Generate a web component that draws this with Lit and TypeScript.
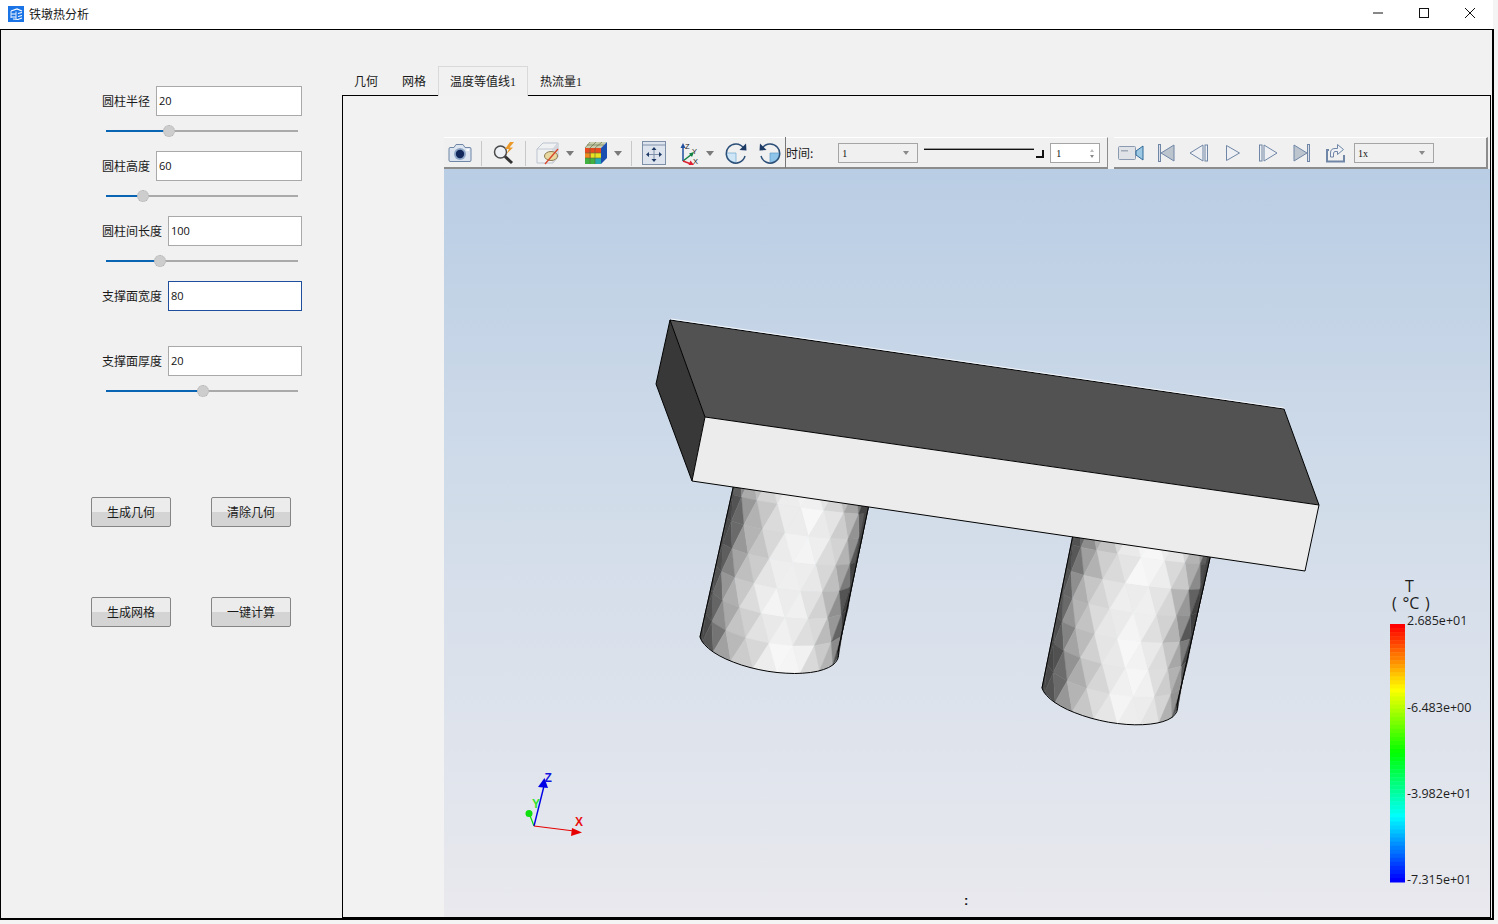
import { LitElement, html, css, svg } from "lit";
import { customElement } from "lit/decorators.js";

type Pt = [number, number];
const hash = (a: number, b: number) => {
  const s = Math.sin(a * 127.1 + b * 311.7) * 43758.5453;
  return s - Math.floor(s);
};

const LIGHT: Pt[] = [[0, 72], [0.035, 95], [0.1, 160], [0.2, 195], [0.35, 228], [0.5, 244], [0.65, 236], [0.78, 212], [0.87, 175], [0.93, 135], [0.965, 70], [1, 60]];
const light = (u: number) => {
  for (let i = 1; i < LIGHT.length; i++) {
    if (u <= LIGHT[i][0]) {
      const [a, b] = LIGHT[i - 1];
      const [c, d] = LIGHT[i];
      return b + ((u - a) / (c - a)) * (d - b);
    }
  }
  return 60;
};

function cylinder(tl: Pt, tr: Pt, bl: Pt, br: Pt, bulge: Pt, seed: number) {
  const nT = 9, nV = 7;
  const p = (th: number, v: number): Pt => {
    const t = Math.max(0, Math.min(Math.PI, th));
    const u = (1 - Math.cos(t)) / 2;
    const s = Math.sin(t);
    const x0 = tl[0] + (tr[0] - tl[0]) * u, y0 = tl[1] + (tr[1] - tl[1]) * u;
    const x1 = bl[0] + (br[0] - bl[0]) * u, y1 = bl[1] + (br[1] - bl[1]) * u;
    return [x0 + (x1 - x0) * v + bulge[0] * s * v, y0 + (y1 - y0) * v + bulge[1] * s * v];
  };
  const step = Math.PI / nT;
  const vert = (c: number, r: number) => p((c + (r % 2 ? 0.5 : 0)) * step, r / nV);
  const shade = (c: number, r: number) => {
    const th = Math.max(0, Math.min(Math.PI, (c + 0.5 + (r % 2 ? 0.5 : 0)) * step));
    const u0 = (1 - Math.cos(th)) / 2;
    const u = u0 + 0.05 * Math.sin(th) * Math.sin(r * 1.15 + seed);
    const n = (hash(c + seed, r) - 0.5) * 12 * Math.sin(th);
    return Math.round(Math.min(248, Math.max(58, light(u) + n)));
  };
  const tris: { pts: string; g: number }[] = [];
  const str = (a: Pt[]) => a.map((q) => `${q[0].toFixed(1)},${q[1].toFixed(1)}`).join(" ");
  for (let r = 0; r < nV; r++) {
    for (let c = -1; c <= nT; c++) {
      const a = vert(c, r), b = vert(c + 1, r), d = vert(c, r + 1), e = vert(c + 1, r + 1);
      if (r % 2 === 0) {
        tris.push({ pts: str([a, b, d]), g: shade(c, r) });
        tris.push({ pts: str([b, e, d]), g: shade(c + 0.5, r) });
      } else {
        tris.push({ pts: str([a, b, e]), g: shade(c, r) });
        tris.push({ pts: str([a, e, d]), g: shade(c - 0.5, r) });
      }
    }
  }
  const outline: Pt[] = [p(0, 0), p(0, 1)];
  for (let i = 1; i <= 24; i++) outline.push(p((i / 24) * Math.PI, 1));
  outline.push(p(Math.PI, 0));
  const band: Pt[] = [];
  for (let i = 0; i <= 8; i++) band.push(p(Math.PI * 0.9, i / 8));
  for (let i = 8; i >= 0; i--) band.push(p(Math.PI, i / 8));
  return svg`${tris.map((t) => {
    const col = `rgb(${t.g},${t.g},${t.g})`;
    return svg`<polygon points=${t.pts} fill=${col} stroke=${col} stroke-width="0.4"></polygon>`;
  })}<polygon points=${str(band)} fill="#444"></polygon><polyline points=${str(outline)} fill="none" stroke="#000" stroke-width="1"></polyline>`;
}

function legendBands() {
  const n = 64, top = 624, h = 258;
  const out = [];
  for (let i = 0; i < n; i++) {
    const hue = Math.round((i / (n - 1)) * 240);
    out.push(svg`<rect x="1390" y=${top + (i * h) / n} width="15" height=${h / n + 0.5} fill=${`hsl(${hue},100%,50%)`}></rect>`);
  }
  return out;
}

const scene = () => svg`
  <svg class="scene" viewBox="444 169 1046 748" width="1046" height="748">
    ${cylinder([737, 470], [872, 490], [700, 637], [838, 652], [8, 28], 3)}
    ${cylinder([1076, 520], [1214, 540], [1042, 688], [1177, 705], [8, 27], 11)}
    <polygon points="670,320 1284,409 1319,505 705,417" fill="#525252"></polygon>
    <polygon points="670,320 656,384 692,481 705,417" fill="#383838"></polygon>
    <polygon points="705,417 1319,505 1305,571 692,481" fill="#ececec"></polygon>
    <path d="M670 320L1284 409L1319 505L1305 571L692 481L656 384Z M705 417L1319 505 M705 417L692 481 M670 320L705 417" fill="none" stroke="#000" stroke-width="1"></path>
    <path d="M671 319L1284 408" fill="none" stroke="#fff" stroke-width="0.8"></path>

    <path d="M534 826L529 813" stroke="#00e000" stroke-width="1.2" fill="none"></path>
    <circle cx="529" cy="813.5" r="3.5" fill="#10e010"></circle>
    <path d="M534 826L544 786" stroke="#0000e6" stroke-width="1.4" fill="none"></path>
    <path d="M544.500 778L548 788L538 787Z" fill="#0000e6"></path>
    <path d="M534 826L574 831" stroke="#e60000" stroke-width="1.2" fill="none"></path>
    <path d="M582 832.500L571 836L572 828Z" fill="#e60000"></path>
    <text class="ax" x="544.500" y="782" fill="#1414e0">Z</text>
    <text class="ax" x="532" y="808" fill="#30e030">Y</text>
    <text class="ax" x="575" y="826" fill="#e81010">X</text>

    ${legendBands()}
    <text class="lgt" x="1405" y="592">T</text>
    <text class="lgc" x="1392" y="609">( °C )</text>
    <text class="lg" x="1407" y="625">2.685e+01</text>
    <text class="lg" x="1407" y="712">-6.483e+00</text>
    <text class="lg" x="1407" y="798">-3.982e+01</text>
    <text class="lg" x="1407" y="884">-7.315e+01</text>
    <text class="colon" x="964" y="905">:</text>
  </svg>`;

const sl = "#6f86a6";
const icons = {
  camera: html`<svg width="24" height="22" viewBox="0 0 24 22"><path d="M2 5.500H6L8 2.500H15L17 5.500H22Q23 5.500 23 7V18Q23 19.500 22 19.500H2Q1 19.500 1 18V7Q1 5.500 2 5.500Z" fill="#dbe4ef" stroke=${sl}></path><circle cx="12" cy="12" r="6" fill="#8ea6c6"></circle><circle cx="12" cy="12" r="4.200" fill="#12285a"></circle><rect x="18.500" y="7" width="2.500" height="2" fill="#fff"></rect></svg>`,
  search: html`<svg width="24" height="24" viewBox="0 0 24 24"><circle cx="8.500" cy="11" r="6" fill="#eef2f6" stroke="#4a4a4a" stroke-width="1.500"></circle><path d="M13 15.500L20 22" stroke="#333" stroke-width="3"></path><path d="M18 1L13 8H17L14.500 13L21 6.500H17.500L22 1Z" fill="#eb9a2a"></path></svg>`,
  cube: html`<svg width="26" height="24" viewBox="-2 0 26 24"><path d="M1 8L7 2H22V16L17 22H1Z" fill="#f0f1f3" stroke="#bcc4d0"></path><path d="M1 8H17V22M17 8L22 2" fill="none" stroke="#c4cad4"></path><path d="M17 8L22 2V16L17 22Z" fill="#d4d8de"></path><ellipse cx="15" cy="15" rx="6.500" ry="4.500" fill="#e9d9a0" stroke="#8a7a50"></ellipse><path d="M9 23L22 8" stroke="#d8452a" stroke-width="1.300"></path></svg>`,
  color: html`<svg width="28" height="24" viewBox="-4 0 28 24"><path d="M1 7L6 1H23L17 7Z" fill="#c8cdb0"></path><path d="M1 7H17V23H1Z" fill="#f2c820"></path><rect x="1" y="7" width="16" height="5" fill="#e84a20"></rect><rect x="1" y="12" width="6" height="5" fill="#f08a20"></rect><rect x="7" y="12" width="10" height="5" fill="#e8e020"></rect><rect x="1" y="17" width="16" height="6" fill="#40b040"></rect><rect x="11" y="17" width="6" height="6" fill="#28a8b0"></rect><path d="M17 7L23 1V17L17 23Z" fill="#1c50b0"></path><path d="M6 7V23M11 7V23M1 12H17M1 17H17M6 1L1 7M12 1L6 7M18 1L11 7M3 4H20" stroke="#5a6a3a" stroke-width=".6" fill="none"></path></svg>`,
  fit: html`<svg width="24" height="24" viewBox="0 0 24 24"><rect x="0.500" y="0.500" width="23" height="23" fill="#dde4ee" stroke="#7e8fa8"></rect><path d="M1 4H23" stroke="#7e8fa8"></path><path d="M12 6L9.500 9H14.500ZM12 21L9.500 18H14.500ZM4 13.500L7 11V16ZM20 13.500L17 11V16Z" fill="#1e3a66"></path><path d="M12 9V18M7 13.500H17" stroke="#7e8fa8"></path></svg>`,
  axes: html`<svg width="22" height="24" viewBox="0 0 22 24"><path d="M4 20V6" stroke="#2050a0" stroke-width="1.500"></path><path d="M4 2L1.500 7H6.500Z" fill="#2050a0"></path><path d="M4 20L13 13" stroke="#108040" stroke-width="1.500"></path><path d="M15 11L10 12.500L13 16Z" fill="#108040"></path><path d="M4 20L12 23" stroke="#e02030" stroke-width="1.500"></path><path d="M15 24L9.500 24L11.500 19.500Z" fill="#e02030"></path><text class="tiny" x="6" y="8">Z</text><text class="tiny" x="13" y="13">Y</text><text class="tiny" x="14" y="23">X</text></svg>`,
  rotR: html`<svg width="22" height="22" viewBox="0 0 22 22"><path d="M11 11V20.500A9.500 9.500 0 0 1 1.500 11Z" fill="#cfe6f7" stroke="#6fa8d0" stroke-width=".7"></path><path d="M18.500 6A9.500 9.500 0 1 0 20 14" fill="none" stroke="#2c4f78" stroke-width="1.500"></path><path d="M21 1.500L21.500 8.500L14.500 8Z" fill="#1c3a64"></path></svg>`,
  rotL: html`<svg width="22" height="22" viewBox="0 0 22 22"><path d="M11 11V20.500A9.500 9.500 0 0 0 20.500 11Z" fill="#8ec4ea" stroke="#5c9cc8" stroke-width=".7"></path><path d="M3.500 6A9.500 9.500 0 1 1 2 14" fill="none" stroke="#2c4f78" stroke-width="1.500"></path><path d="M1 1.500L0.500 8.500L7.500 8Z" fill="#1c3a64"></path></svg>`,
  video: html`<svg width="26" height="16" viewBox="0 0 26 16"><rect x="0.500" y="1.500" width="17" height="13" rx="1" fill="#dfe3e8" stroke="#8a9ab0"></rect><rect x="3" y="5" width="7" height="1.500" fill="#a0aab8"></rect><path d="M18 6L25 1V15L18 10Z" fill="#9cc8e4" stroke="#2f6a98"></path></svg>`,
  first: html`<svg width="18" height="18" viewBox="0 0 18 18"><rect x="1.500" y="0.500" width="2" height="17" fill="#dbe0e8" stroke=${sl}></rect><path d="M17 1V17L4 9Z" fill="#bcc4ce" stroke=${sl}></path></svg>`,
  prev: html`<svg width="20" height="18" viewBox="0 0 20 18"><path d="M14 1V17L1 9Z" fill="#eef0f3" stroke=${sl}></path><rect x="16" y="1" width="2.500" height="16" fill="#eef0f3" stroke=${sl}></rect></svg>`,
  play: html`<svg width="16" height="18" viewBox="0 0 16 18"><path d="M1.500 1.500V16.500L14.500 9Z" fill="#eef0f3" stroke=${sl}></path></svg>`,
  next: html`<svg width="20" height="18" viewBox="0 0 20 18"><rect x="1.500" y="1" width="2.500" height="16" fill="#eef0f3" stroke=${sl}></rect><path d="M6 1V17L19 9Z" fill="#eef0f3" stroke=${sl}></path></svg>`,
  last: html`<svg width="18" height="18" viewBox="0 0 18 18"><path d="M1 1V17L14 9Z" fill="#bcc4ce" stroke=${sl}></path><rect x="14.500" y="0.500" width="2" height="17" fill="#dbe0e8" stroke=${sl}></rect></svg>`,
  share: html`<svg width="20" height="20" viewBox="0 0 20 20"><path d="M4 7H2V18.500H19V12" fill="none" stroke=${sl} stroke-width="2"></path><path d="M5.500 14V10Q5.500 5.500 10 5.500H12.500V1.500L18.500 6.500L12.500 11.500V8.500H10Q8.500 8.500 8.500 11V14Z" fill="#eef1f5" stroke=${sl}></path></svg>`,
  drop: html`<svg width="8" height="5" viewBox="0 0 8 5"><path d="M0 0H8L4 5Z" fill="#7a7a7a"></path></svg>`,
};

const fields = [
  { label: "圆柱半径", value: "20", pos: 63, wide: true },
  { label: "圆柱高度", value: "60", pos: 37, wide: true },
  { label: "圆柱间长度", value: "100", pos: 54, wide: false },
  { label: "支撑面宽度", value: "80", focus: true, wide: false },
  { label: "支撑面厚度", value: "20", pos: 97, wide: false },
];

@customElement("app-root")
export class AppRoot extends LitElement {
  static styles = css`
    :host { display: block; width: 1498px; height: 924px; background: #f4f4f4; overflow: hidden;
      font-family: "Noto Sans CJK SC", "Liberation Sans", sans-serif; font-size: 12px; color: #1a1a1a; }
    .title { height: 29px; width: 1493px; background: #fff; display: flex; align-items: center; }
    .logo { margin: 0 0 2px 8px; }
    .title-text { margin-left: 5px; flex: 1; padding-bottom: 3px; }
    .wbtn { width: 46px; height: 29px; display: flex; align-items: center; justify-content: center; padding-bottom: 3px; box-sizing: border-box; }

    .window { width: 1494px; height: 891px; box-sizing: border-box; border: 1px solid #000; border-width: 1px 2px 2px 1px;
      background: #f1f1f1; display: flex; }
    .side { width: 341px; flex: none; padding-top: 56px; box-sizing: border-box; }
    .field { height: 65px; width: 301px; }
    .row { display: flex; justify-content: flex-end; align-items: center; gap: 6px; height: 30px; }
    .row span { padding-bottom: 2px; }
    .input { height: 30px; box-sizing: border-box; border: 1px solid #a9a9a9; background: #fff; padding-left: 2px;
      font: 11px/28px "Open Sans", sans-serif; color: #111; width: 146px; }
    .input.narrow { width: 134px; }
    .input.focus { border-color: #1f4f9c; }
    .track { position: relative; margin: 14px 0 0 105px; width: 192px; height: 2px; background: #aaa; }
    .fill { height: 2px; background: #0a64b4; }
    .thumb { position: absolute; top: -5px; width: 12px; height: 12px; margin-left: -6px; border-radius: 50%;
      background: #cdcdcd; box-sizing: border-box; border: 1px dotted #b0b0b0; }
    .btns { display: flex; gap: 40px; margin-left: 90px; }
    .btns.one { margin-top: 86px; }
    .btns.two { margin-top: 70px; }
    .btn { width: 80px; height: 30px; box-sizing: border-box; border: 1px solid #858585; border-radius: 2px; display: flex; padding-bottom: 2px;
      align-items: center; justify-content: center; background: linear-gradient(#ececec 0 50%, #d4d4d4 50% 100%); }

    .main { flex: 1; display: flex; flex-direction: column; min-width: 0; background: #f1f1f1; }
    .tabs { display: flex; padding-top: 37px; height: 65px; box-sizing: border-box; align-items: flex-end;
      font-family: "Liberation Serif", "Noto Sans CJK SC", serif; }
    .tab { padding: 0 12px; height: 28px; line-height: 31px; }
    .tab.active { padding: 0 11px; height: 29px; border: 1px solid #d9d9d9; border-bottom: none; line-height: 31px; background: #f1f1f1; margin-bottom: -1px; position: relative; z-index: 1; }
    .pane { height: 823px; box-sizing: border-box; border: 1px solid #000; margin-right: 1px; padding: 41px 0 0 101px; display: flex; flex-direction: column; background: #f2f2f2; }
    .bar { display: flex; height: 32px; background: #f0f0f0; }
    .tb { display: grid; grid-template-rows: 28px; grid-template-columns: 32px 10px 36px 6px 38px 8px 40px 8px 6px 6px 40px 32px 8px 44px 24px 6px auto; align-items: center; justify-items: center;
      box-sizing: border-box; height: 32px; padding-top: 1px; border-top: 1px solid #fff; border-bottom: 2px solid #8c8c8c; border-right: 1px solid #8c8c8c; width: 664px; }
    .sep { width: 1px; height: 25px; background: #c8c8c8; }
    .dark { width: 1px; height: 31px; background: #777; align-self: start; margin-top: -2px; }
    .time { justify-self: start; margin-left: -2px; }
    .time span { padding-bottom: 1px; }
    .tb2 { display: flex; align-items: center; height: 32px; box-sizing: border-box; padding-top: 1px; border-top: 1px solid #fff; border-bottom: 2px solid #8c8c8c; margin-left: 6px; width: 374px; border-right: 2px solid #8c8c8c; }
    .combo { height: 20px; box-sizing: border-box; border: 1px solid #a5a5a5; background: #f0f0f0; display: flex; align-items: center; justify-content: space-between;
      padding: 0 8px 0 3px; font: 10px "Liberation Serif", serif; color: #111; width: 80px; }
    .combo i { width: 0; height: 0; border: 3px solid transparent; border-top: 4px solid #8a8a8a; border-bottom: none; }
    .mid { display: flex; align-items: center; height: 28px; }
    .timec { margin-left: 25px; }
    .tslider { position: relative; width: 120px; height: 14px; margin: 0 6px; }
    .tline { position: absolute; left: 0; top: 2px; width: 110px; height: 1px; background: #111; border-top: 1px solid #999; }
    .thandle { position: absolute; right: 0; top: 4px; width: 8px; height: 8px; border-right: 2px solid #111; border-bottom: 2px solid #111; box-sizing: border-box; }
    .spin { width: 50px; height: 20px; box-sizing: border-box; border: 1px solid #a5a5a5; background: #fff; font: 10px "Liberation Serif", serif; display: flex; align-items: center; justify-content: space-between; padding: 0 5px; color: #111; }
    .spin div { display: flex; flex-direction: column; gap: 3px; }
    .spin b { display: block; width: 0; height: 0; border: 2px solid transparent; }
    .spin .u { border-bottom: 3px solid #bbb; border-top: none; }
    .spin .d { border-top: 3px solid #888; border-bottom: none; }
    .play { display: grid; grid-template-columns: 4px 26px 13px 18px 14px 20px 16px 16px 17px 20px 15px 18px 14px 20px 9px auto; align-items: center; justify-items: start; }
    .view { flex: 1; background: linear-gradient(#b9cde4, #cfdbe9 40%, #e9e9ee); margin-right: 0; }
    .scene { display: block; }
    .ax { font: bold 12px "Liberation Sans", sans-serif; }
    .lg { font: 12.500px "Open Sans", sans-serif; fill: #1e1e1e; }
    .lgt { font: 16px/1 "Open Sans", sans-serif; fill: #1e1e1e; }
    .lgc { font: 16px/1 "Open Sans", sans-serif; fill: #1e1e1e; word-spacing: 1.500px; }
    .colon { font: bold 13px "Liberation Sans", sans-serif; fill: #111; }
    .tiny { font: 7.500px "Liberation Sans", sans-serif; fill: #222; }
  `;

  render() {
    return html`
      <div class="title">
        <svg class="logo" width="16" height="16" viewBox="0 0 16 16"><rect width="16" height="16" fill="#1a74e6"></rect><path d="M3 5L9 3L14 5M3 8H8M10 7.500L14 6.500M3 11H8M10 10.500L14 9.500M5 13L10 13.500L14 12" stroke="#fff" stroke-width="1.200" fill="none"></path><path d="M3 5V12M8 5.500V13" stroke="#dbe9fb" stroke-width="1" fill="none"></path></svg>
        <div class="title-text">铁墩热分析</div>
        <div class="wbtn"><svg width="10" height="10" viewBox="0 0 10 10"><path d="M0 5H10" stroke="#111"></path></svg></div>
        <div class="wbtn"><svg width="10" height="10" viewBox="0 0 10 10"><rect x="0.500" y="0.500" width="9" height="9" fill="none" stroke="#111"></rect></svg></div>
        <div class="wbtn"><svg width="10" height="10" viewBox="0 0 10 10"><path d="M0 0L10 10M10 0L0 10" stroke="#111"></path></svg></div>
      </div>
      <div class="window">
        <div class="side">
          ${fields.map(
            (f) => html`<div class="field">
              <div class="row">
                <span>${f.label}</span>
                <div class="input ${f.wide ? "" : "narrow"} ${f.focus ? "focus" : ""}">${f.value}</div>
              </div>
              ${f.pos !== undefined
                ? html`<div class="track">
                    <div class="fill" style="width:${f.pos}px"></div>
                    <div class="thumb" style="left:${f.pos}px"></div>
                  </div>`
                : ""}
            </div>`
          )}
          <div class="btns one"><div class="btn">生成几何</div><div class="btn">清除几何</div></div>
          <div class="btns two"><div class="btn">生成网格</div><div class="btn">一键计算</div></div>
        </div>
        <div class="main">
          <div class="tabs">
            <div class="tab">几何</div>
            <div class="tab">网格</div>
            <div class="tab active">温度等值线1</div>
            <div class="tab">热流量1</div>
          </div>
          <div class="pane">
            <div class="bar">
              <div class="tb">
                ${icons.camera}<div class="sep"></div>${icons.search}<div class="sep"></div>
                ${icons.cube}${icons.drop}${icons.color}${icons.drop}<span></span><div class="sep"></div>
                ${icons.fit}${icons.axes}${icons.drop}${icons.rotR}${icons.rotL}<div class="dark"></div>
                <div class="mid time">
                  <span>时间:</span>
                  <div class="combo timec">1<i></i></div>
                  <div class="tslider"><div class="tline"></div><div class="thandle"></div></div>
                  <div class="spin">1<div><b class="u"></b><b class="d"></b></div></div>
                </div>
              </div>
              <div class="tb2">
                <div class="play">
                  <span></span>${icons.video}<span></span>${icons.first}<span></span>${icons.prev}<span></span>${icons.play}<span></span>${icons.next}<span></span>${icons.last}<span></span>${icons.share}<span></span>
                  <div class="combo">1x<i></i></div>
                </div>
              </div>
            </div>
            <div class="view">${scene()}</div>
          </div>
        </div>
      </div>
    `;
  }
}
